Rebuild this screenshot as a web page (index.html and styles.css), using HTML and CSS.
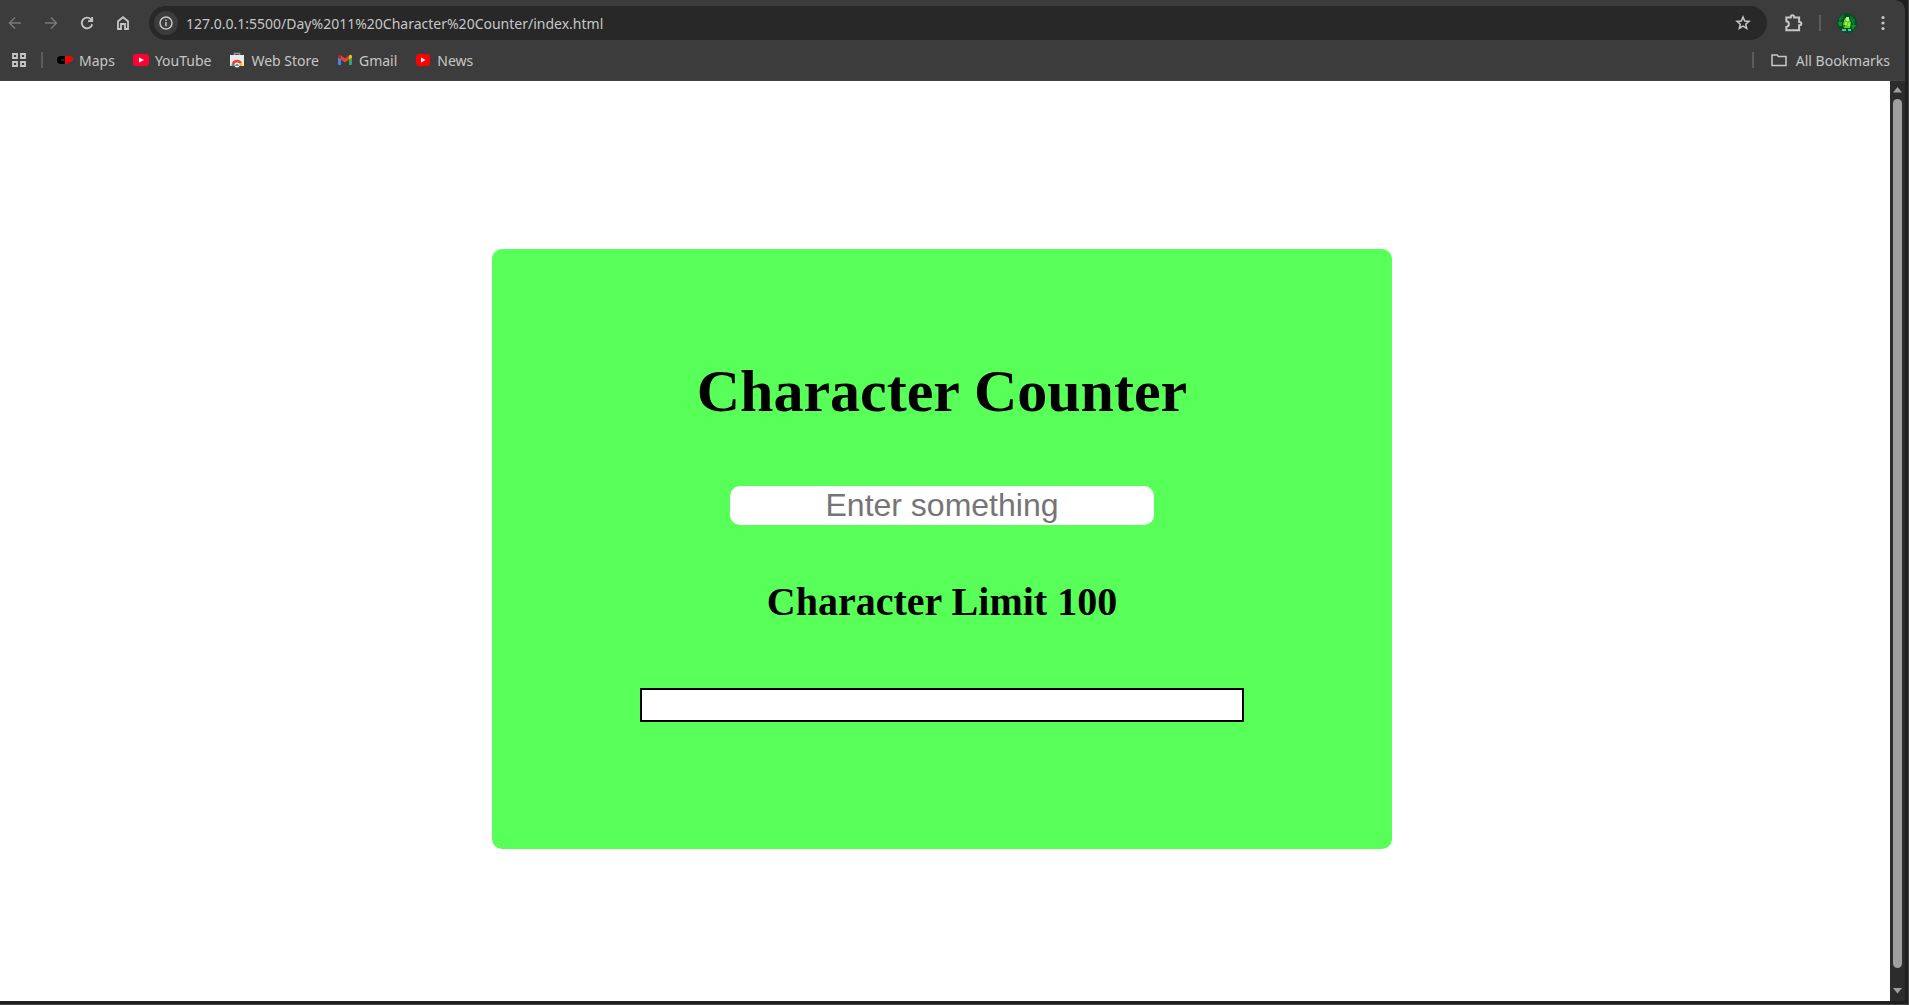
FILE: index.html
```html
<!DOCTYPE html>
<html lang="en">
<head>
<meta charset="utf-8">
<title>Character Counter</title>
<link rel="stylesheet" href="styles.css">
</head>
<body>
<div class="window">
  <header class="chrome">
    <div class="toolbar">
      <nav class="nav-buttons" aria-label="Navigation">
        <button class="icon-button" disabled aria-label="Back"><svg width="16" height="16" viewBox="0 0 16 16"><path d="M14 8H3M8 2.500L2.500 8L8 13.500"/></svg></button>
        <button class="icon-button" disabled aria-label="Forward"><svg width="16" height="16" viewBox="0 0 16 16"><path d="M2 8H13M8 2.500L13.500 8L8 13.500"/></svg></button>
        <button class="icon-button" aria-label="Reload"><svg class="bold" width="16" height="16" viewBox="0 0 16 16"><path d="M13.200 9.200A5.300 5.300 0 1 1 12 4.500L13 5.700M13.200 2V6.200H9" /></svg></button>
        <button class="icon-button" aria-label="Home"><svg class="bold" width="16" height="16" viewBox="0 0 16 16"><path d="M3 6.200L8 2.200L13 6.200V14H10V9H6V14H3Z"/></svg></button>
      </nav>
      <div class="omnibox">
        <button class="site-info" aria-label="Site information"><svg width="16" height="16" viewBox="0 0 16 16"><circle cx="8" cy="8" r="6"/><path d="M8 7V11.300M8 4.500V6"/></svg></button>
        <input class="address" type="text" aria-label="Address" value="127.0.0.1:5500/Day%2011%20Character%20Counter/index.html">
        <button class="icon-button" aria-label="Bookmark this page"><svg width="16" height="16" viewBox="0 0 16 16"><path d="M8 2L9.700 6L14 6.400L10.700 9.200L11.700 13.500L8 11.200L4.300 13.500L5.300 9.200L2 6.400L6.300 6Z"/></svg></button>
      </div>
      <div class="tools">
        <button class="icon-button" aria-label="Extensions"><svg class="bold" width="20" height="20" viewBox="0 0 18 18"><path d="M3 4H7V3.500A1.500 1.500 0 0 1 10 3.500V4H14.500V8H15A1.500 1.500 0 0 1 15 11H14.500V15.500H3V12.500C6 12.500 6 7.500 3 7.500Z"/></svg></button>
        <span class="divider"></span>
        <button class="icon-button" aria-label="Profile"><svg class="filled" width="20" height="20" viewBox="0 0 20 20"><circle cx="10" cy="10" r="10" fill="#064c20"/><path d="M2 5L7 1L6 5L2 10ZM13 2L18 7L17 13L14 8Z" fill="#087a35"/><path d="M1 9H5V13H2ZM14 12H19L16 17Z" fill="#0a963b"/><path d="M8 5H12L14 10L13 15H7L6 11Z" fill="#54d62c"/><path d="M9 4H12V8H9Z" fill="#b8e8a0"/><path d="M8 9H10V12H8ZM11 10H13V13H11Z" fill="#a6ef20"/><path d="M6 12H8V14H6Z" fill="#a44a20"/><path d="M5 16H9V18H5ZM11 16H14V18H11Z" fill="#20d9b0"/></svg></button>
        <button class="icon-button" aria-label="Menu"><svg class="filled" width="16" height="16" viewBox="0 0 16 16"><circle cx="8" cy="2.500" r="1.600"/><circle cx="8" cy="8" r="1.600"/><circle cx="8" cy="13.500" r="1.600"/></svg></button>
      </div>
    </div>
    <nav class="bookmarks" aria-label="Bookmarks">
      <button class="icon-button apps" aria-label="Apps"><svg class="bold" width="16" height="16" viewBox="0 0 16 16"><path d="M2 2H6V6H2ZM10 2H14V6H10ZM2 10H6V14H2ZM10 10H14V14H10Z"/></svg></button>
      <span class="divider"></span>
      <div class="bookmark-list">
        <a class="bookmark" href="#maps"><svg class="filled" width="16" height="16" viewBox="0 0 16 16"><path d="M4 4H8V12H4A4 4 0 0 1 4 4Z" fill="#000"/><path d="M8 4H13A3 3 0 0 1 13 10H11V12H8Z" fill="#f00"/><path d="M4 7H7V9H4Z" fill="#222"/><path d="M11 6H13V7H11Z" fill="#b00"/></svg>Maps</a>
        <a class="bookmark" href="#youtube"><svg class="filled" width="16" height="16" viewBox="0 0 16 16"><rect y="2" width="16" height="12" rx="3" fill="#ff0033"/><path d="M6 5.500L11 8L6 10.500Z" fill="#fff"/></svg>YouTube</a>
        <a class="bookmark" href="#web-store"><svg class="filled" width="16" height="16" viewBox="0 0 16 16"><path d="M5.500 3V1.500H10.500V3" fill="none" stroke="#999" stroke-width="1.500"/><path d="M1 3H15V14H1Z" fill="#e8eaed"/><path d="M2.500 14A5.500 5.500 0 0 1 13.500 14Z" fill="#fbbc04"/><path d="M3 11A5.500 5.500 0 0 1 13 11L8 11L5.500 14Z" fill="#ea4335"/><path d="M2.500 14L3 11L6 14Z" fill="#34a853"/><circle cx="8" cy="13" r="2.500" fill="#fff"/><path d="M6 14A2 2 0 0 1 10 14Z" fill="#4285f4"/></svg>Web Store</a>
        <a class="bookmark" href="#gmail"><svg class="filled" width="16" height="16" viewBox="0 0 16 16"><path d="M1 5L4 7V13H2A1 1 0 0 1 1 12Z" fill="#4285f4"/><path d="M12 7L15 5V12A1 1 0 0 1 14 13H12Z" fill="#34a853"/><path d="M4 3.500L8 6.500L12 3.500V7.500L8 10.500L4 7.500Z" fill="#ea4335"/><path d="M1 4A2 2 0 0 1 4 3.500V7.500L1 5.500Z" fill="#c5221f"/><path d="M12 3.500A2 2 0 0 1 15 4V5.500L12 7.500Z" fill="#fbbc04"/></svg>Gmail</a>
        <a class="bookmark" href="#news"><svg class="filled" width="16" height="16" viewBox="0 0 16 16"><rect x="1" y="2" width="14" height="12" rx="3" fill="#f00"/><path d="M6 5.500L10.500 8L6 10.500Z" fill="#fff"/></svg>News</a>
      </div>
      <span class="divider"></span>
      <a class="bookmark all" href="#all"><svg width="18" height="18" viewBox="0 0 18 18"><path d="M2 4H7L8.500 5.500H16V14.500H2Z"/></svg>All Bookmarks</a>
    </nav>
  </header>
  <div class="viewport">
    <main class="page">
      <form class="counter">
        <h1 class="title">Character Counter</h1>
        <input class="entry" type="text" placeholder="Enter something" aria-label="Enter something">
        <h2 class="limit">Character Limit 100</h2>
        <div class="meter"></div>
      </form>
    </main>
    <div class="scrollbar">
      <svg class="filled" width="9" height="6" viewBox="0 0 9 6"><path d="M0 5.500L4.500 0L9 5.500Z"/></svg>
      <span class="thumb"></span>
      <svg class="filled" width="9" height="6" viewBox="0 0 9 6"><path d="M0 0H9L4.500 5.500Z"/></svg>
    </div>
  </div>
</div>
</body>
</html>
```
FILE: styles.css
```css
* {
  box-sizing: border-box;
}

body {
  margin: 0;
  min-height: 100vh;
  display: flex;
  background: #1f1f1f;
  border-right: 1px solid #444;
  border-bottom: 1px solid #444;
}

.window {
  flex: 1;
  display: flex;
  flex-direction: column;
  margin: 0 3px 3px 0;
}

.chrome {
  background: #3c3c3c;
  border-bottom: 1px solid #444;
  border-top-right-radius: 10px;
  color: #c7c7c7;
  font-family: "Noto Sans", sans-serif;
  font-size: 14px;
}

button {
  border: 0;
  padding: 0;
  background: none;
  color: inherit;
}

svg {
  display: block;
  flex: none;
  fill: none;
  stroke: currentColor;
  stroke-width: 1.5;
}

.bold {
  stroke-width: 1.8;
}

.filled {
  fill: currentColor;
  stroke: none;
}

.icon-button {
  display: flex;
  align-items: center;
  justify-content: center;
  flex: none;
  width: 20px;
  height: 20px;
}

.icon-button:disabled {
  color: #787878;
}

.toolbar {
  display: flex;
  align-items: center;
  padding: 6px 12px 6px 5px;
}

.nav-buttons {
  display: flex;
  gap: 16px;
  margin-right: 16px;
}

.omnibox {
  flex: 1;
  display: flex;
  align-items: center;
  height: 34px;
  padding: 0 14px 0 5px;
  border-radius: 17px;
  background: #282828;
}

.site-info {
  display: flex;
  align-items: center;
  justify-content: center;
  width: 24px;
  height: 24px;
  border-radius: 50%;
  background: #3c3c3c;
}

.address {
  flex: 1;
  padding: 0;
  margin-left: 8px;
  border: 0;
  background: none;
  color: #c7c7c7;
  font: 14px "Noto Sans", sans-serif;
}

.tools {
  display: flex;
  align-items: center;
  gap: 16px;
  margin-left: 16px;
}

.divider {
  width: 2px;
  height: 16px;
  background: #5c5c5c;
}

.bookmarks {
  display: flex;
  align-items: center;
  height: 34px;
  padding: 0 15px 6px 9px;
}

.apps {
  margin-right: 12px;
}

.bookmark-list {
  flex: 1;
  display: flex;
  gap: 18px;
  margin-left: 14px;
}

.bookmark {
  display: flex;
  align-items: center;
  gap: 6px;
  color: inherit;
  text-decoration: none;
}

.all {
  gap: 8px;
  margin-left: 16px;
}

.viewport {
  flex: 1;
  display: flex;
}

.page {
  flex: 1;
  display: flex;
  align-items: center;
  justify-content: center;
  padding: 16px 6px 0 0;
  background: #fff;
}

.counter {
  width: 900px;
  max-width: 100%;
  min-height: 600px;
  display: flex;
  flex-direction: column;
  align-items: center;
  justify-content: center;
  padding-bottom: 20px;
  border-radius: 10px;
  background: #58ff58;
  color: #000;
  font-family: "Liberation Serif", serif;
}

.title {
  margin: 0 0 60px;
  font-size: 60px;
  line-height: 70px;
}

.entry {
  width: 424px;
  height: 39px;
  padding: 0;
  border: 0;
  border-radius: 10px;
  background: #fff;
  text-align: center;
  font: 32px "Liberation Sans", sans-serif;
}

.entry::placeholder {
  color: #757575;
}

.limit {
  margin: 54px 0 63px;
  font-size: 40px;
  line-height: 46px;
}

.meter {
  width: 604px;
  height: 34px;
  border: 2px solid #000;
  background: #fff;
}

.scrollbar {
  display: flex;
  flex-direction: column;
  align-items: center;
  width: 15px;
  padding: 6px 0 7px;
  background: #2c2c2c;
  color: #9f9f9f;
}

.thumb {
  flex: 1;
  width: 9px;
  margin: 6px 0 20px;
  border-radius: 5px;
  background: #9f9f9f;
}
```
